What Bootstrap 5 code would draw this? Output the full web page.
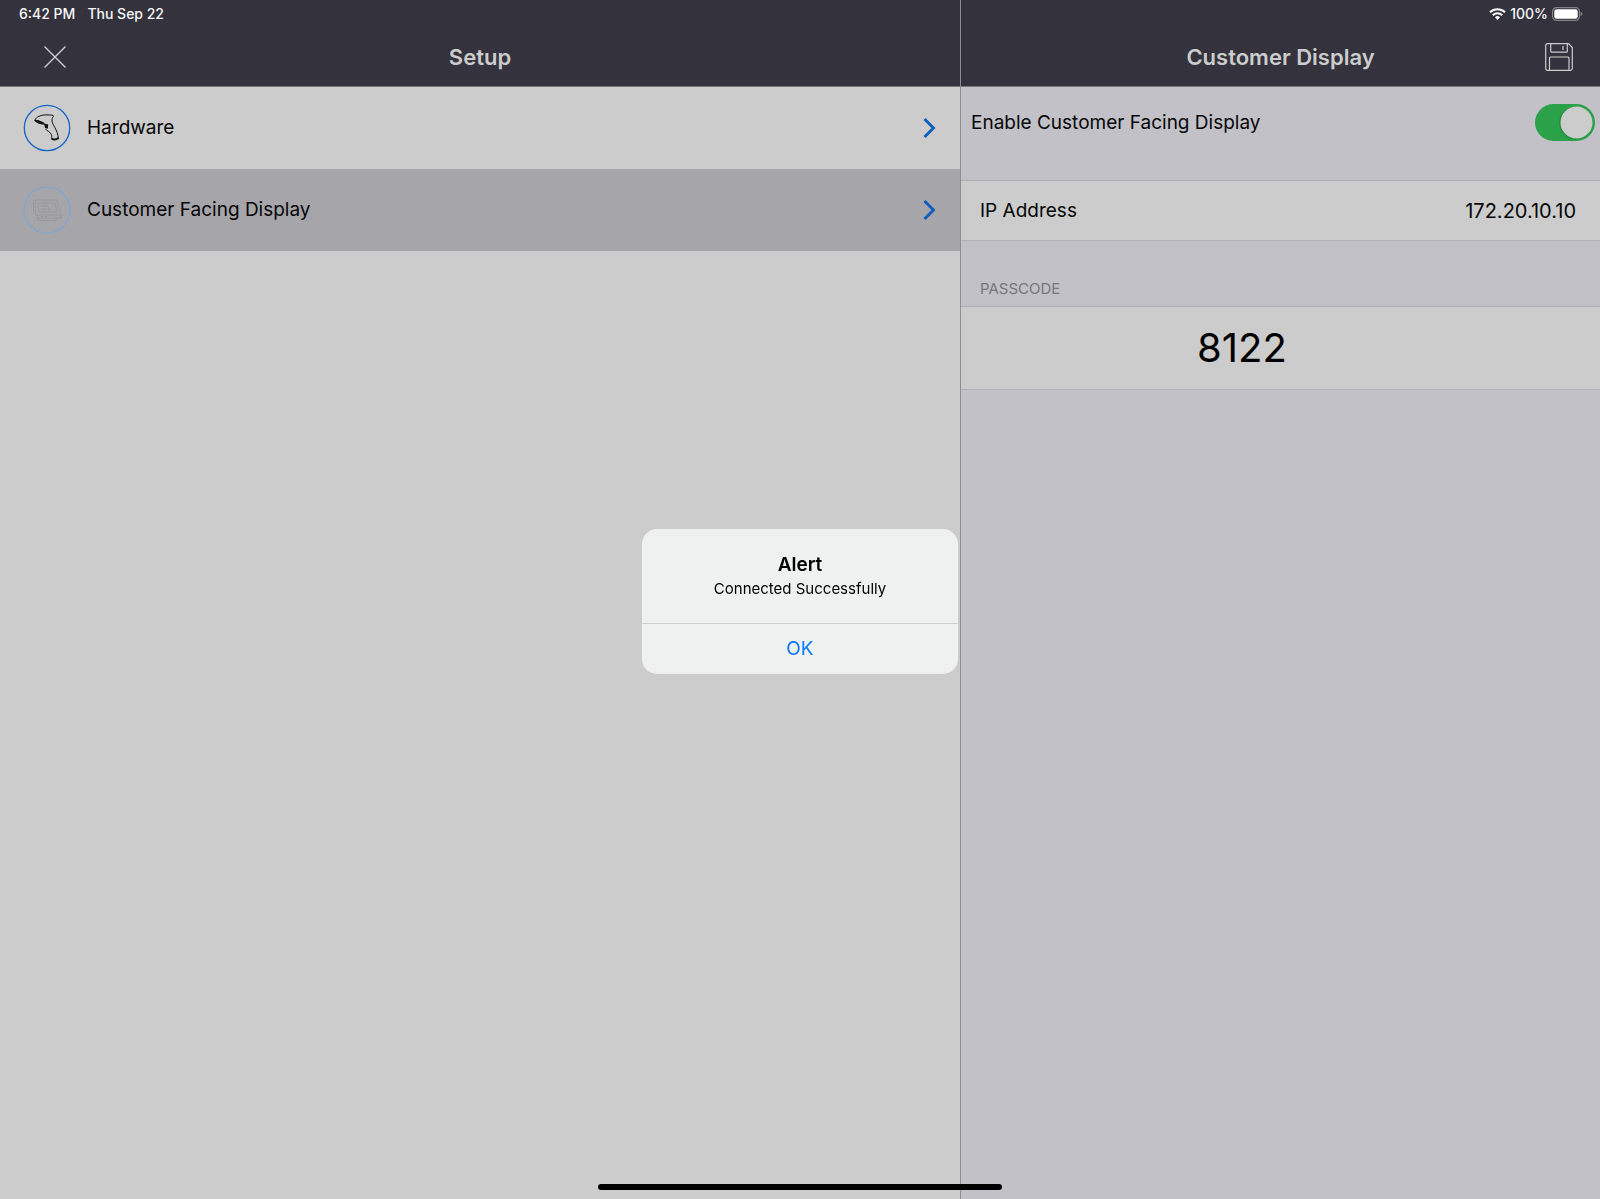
<!DOCTYPE html>
<html lang="en">
<head>
<meta charset="utf-8">
<meta name="viewport" content="width=device-width, initial-scale=1">
<title>Setup</title>
<link href="https://cdn.jsdelivr.net/npm/bootstrap@5.3.0/dist/css/bootstrap.min.css" rel="stylesheet">
<style>
  body { font-family: Inter, "Liberation Sans", sans-serif; font-size: 19px; line-height: 24px; color: #060606; background: #ccc; }
  .pane-setup { width: 60%; background: #ccc; }
  .pane-detail { width: 40%; background: #c2c1c7; border-left: 1px solid #8e8e8e; }
  .top-bar { background: #33323d; border-bottom: 1px solid #76757c; color: #ccc; }
  .status-line { height: 28px; font-size: 14px; line-height: 20px; font-weight: 500; color: #f8f8f8; padding: 0 17px 0 19px; gap: 12px; }
  .title-line { display: grid; grid-template-columns: 56px 1fr 56px; height: 58px; padding: 0 27px; }
  .detail-title { padding: 0 13px; }
  .title-line h1 { font-size: 22px; line-height: 28px; font-weight: 600; }
  .title-line .btn { border: 0; color: #ccc; line-height: 0; }
  .menu-item { height: 82px; padding: 0 24px 0 23px; color: #060606; }
  .menu-item.chosen { background: #a6a5aa; }
  .chev { color: #0a5cbd; }
  .switch-row { height: 93px; padding: 17px 5px 0 10px; }
  .switch-row label { line-height: 37px; }
  .switch-row .form-check-input { width: 60px; height: 37px; border: 0; box-shadow: none; background-color: #b4b4b8; background-size: 37px 37px;
    --bs-form-switch-bg: url("data:image/svg+xml,%3csvg xmlns='http://www.w3.org/2000/svg' viewBox='0 0 37 37'%3e%3ccircle cx='18.5' cy='18.5' r='16' fill='%23cccccc'/%3e%3c/svg%3e"); }
  .switch-row .form-check-input:checked { background-color: #2ba149;
    --bs-form-switch-bg: url("data:image/svg+xml,%3csvg xmlns='http://www.w3.org/2000/svg' viewBox='0 0 37 37'%3e%3ccircle cx='17.5' cy='19' r='16.5' fill='%23268d40'/%3e%3ccircle cx='18.5' cy='18.5' r='16' fill='%23cccccc'/%3e%3c/svg%3e"); }
  .cell-row { background: #ccc; border-top: 1px solid #afaeb4; border-bottom: 1px solid #b2b1b7; padding: 0 24px 0 19px; }
  .ip-row { height: 61px; }
  .ip-value { font-size: 20px; }
  .group-label { font-size: 15px; line-height: 20px; font-weight: 400; color: #77767c; padding: 38px 19px 7px; }
  .code-row { height: 84px; padding-right: 96px; font-size: 40px; line-height: 48px; color: #000; }
  .alert-layer { z-index: 20; padding-top: 4px; }
  .alert-box { width: 316px; border-radius: 15px; background: #eff0f0; color: #000; }
  .alert-box h2 { font-size: 19px; line-height: 24px; font-weight: 600; }
  .alert-box p { font-size: 15px; line-height: 24px; }
  .alert-text { padding: 24px 16px 22px; }
  .alert-box .btn { height: 51px; border: 0; border-top: 1px solid #cfd0d0; border-radius: 0; color: #0a7aff; font-size: 19px; line-height: 24px; }
  .home-bar { width: 404px; height: 6px; border-radius: 3px; background: #000; bottom: 9px; z-index: 21; }
</style>
<script src="https://cdn.jsdelivr.net/npm/bootstrap@5.3.0/dist/js/bootstrap.bundle.min.js"></script>
</head>
<body>
<div class="d-flex min-vh-100">
  <section class="pane-setup d-flex flex-column">
    <header class="top-bar">
      <div class="status-line d-flex align-items-center"><span>6:42 PM</span><span>Thu Sep 22</span></div>
      <div class="title-line align-items-center">
        <button type="button" class="btn p-0 d-flex justify-content-center" aria-label="Close">
          <svg width="24" height="24" viewBox="0 0 24 24" fill="none" stroke="currentColor" stroke-width="1.4"><path d="M1.500 1.500l21 21M22.500 1.500l-21 21"/></svg>
        </button>
        <h1 class="m-0 text-center">Setup</h1>
      </div>
    </header>
    <nav>
      <a href="#hardware" class="menu-item d-flex align-items-center text-decoration-none">
        <svg width="48" height="48" viewBox="0 0 48 48" fill="none" stroke="#111" stroke-width="1">
          <circle cx="24" cy="24" r="22.700" stroke="#1565c4" stroke-width="1.300"/>
          <path d="M12 16.500c0-2.500 4-5 9-5.500 4-.4 7 .2 9 .2l.4 1.300c-.8 1-1.600 2-1.400 4.500.3 4 5.500 8 6.500 18"/>
          <path d="M12 16.500c.5 1.500 4 2.800 7 3.500l4 .5M22.500 25l1.500 1.500c4 2 5.500 5 4.500 8"/>
          <path d="M12.500 16.500c2-.5 5 1 7.500 2.500-3 .8-6-.6-7.500-2.500z" fill="#111" stroke-width="1.500"/>
          <path d="M22 20.500l2.500.5-.3 3-1.700-.5z" fill="#111" stroke-width="1.300"/>
          <path d="M28.500 34.500c2 1.500 5 1 7-.5" stroke-width="2"/>
        </svg>
        <span class="ms-3 flex-grow-1">Hardware</span>
        <svg class="chev" width="13" height="20" viewBox="0 0 13 20" fill="none" stroke="currentColor" stroke-width="2.800"><path d="M1.500 1l9 9-9 9"/></svg>
      </a>
      <a href="#display" class="menu-item chosen d-flex align-items-center text-decoration-none" aria-current="page">
        <svg width="48" height="48" viewBox="0 0 48 48" fill="none" stroke="#96969a" stroke-width=".8">
          <circle cx="24" cy="24" r="23" stroke="#6fa8e0" stroke-width="1.200" stroke-dasharray="3 1"/>
          <path d="M12.500 14H34l4 15H12.500zM10.500 14v14.500M15.500 17H32l2.500 9H15.500zM18 20h8M18 23h10"/>
          <path d="M14 29v3h24v-3M18 30.500h2M22 30.500h2M15 32v2.500h18V32"/>
        </svg>
        <span class="ms-3 flex-grow-1">Customer Facing Display</span>
        <svg class="chev" width="13" height="20" viewBox="0 0 13 20" fill="none" stroke="currentColor" stroke-width="2.800"><path d="M1.500 1l9 9-9 9"/></svg>
      </a>
    </nav>
  </section>

  <main class="pane-detail">
    <header class="top-bar">
      <div class="status-line d-flex align-items-center justify-content-end">
        <div class="d-flex align-items-center gap-1">
          <svg width="17" height="12" viewBox="0 0 17 12" fill="none" stroke="#f8f8f8" stroke-width="2"><path d="M1 4.300a10.800 10.800 0 0 1 15 0M3.800 7.200a6.700 6.700 0 0 1 9.400 0"/><path d="M8.500 12l-2.500-2.700a3.600 3.600 0 0 1 5 0z" fill="#f8f8f8" stroke="none"/></svg>
          <span>100%</span>
          <svg width="31" height="14" viewBox="0 0 31 14"><rect x=".6" y=".6" width="26.800" height="12.800" rx="4" fill="none" stroke="#85848b" stroke-width="1.200"/><rect x="2.300" y="2.200" width="23.400" height="9.600" rx="2.300" fill="#fff"/><path d="M28.600 4.800c2.300.7 2.300 3.700 0 4.400z" fill="#85848b"/></svg>
        </div>
      </div>
      <div class="title-line detail-title align-items-center">
        <span></span>
        <h1 class="m-0 text-center">Customer Display</h1>
        <button type="button" class="btn p-0 d-flex justify-content-center" aria-label="Save">
          <svg width="28" height="28" viewBox="0 0 28 28" fill="none" stroke="currentColor" stroke-width="1.200"><path d="M2.500.7h21l3.800 3.800v21a1.800 1.800 0 0 1-1.800 1.800h-23a1.800 1.800 0 0 1-1.800-1.800v-23A1.800 1.800 0 0 1 2.500.7z"/><path d="M5.700.7v7.500a1 1 0 0 0 1 1h14.600a1 1 0 0 0 1-1V.7M18 3v4M4.500 27.300V15a1 1 0 0 1 1-1h17.500a1 1 0 0 1 1 1v12.300"/></svg>
        </button>
      </div>
    </header>
    <div class="switch-row form-switch d-flex align-items-start justify-content-between">
      <label class="form-check-label" for="enableDisplay">Enable Customer Facing Display</label>
      <input class="form-check-input m-0" type="checkbox" role="switch" id="enableDisplay" checked>
    </div>
    <div class="cell-row ip-row d-flex align-items-center justify-content-between"><span>IP Address</span><span class="ip-value">172.20.10.10</span></div>
    <h2 class="group-label m-0">PASSCODE</h2>
    <div class="cell-row code-row d-flex align-items-center justify-content-center">8122</div>
  </main>
</div>

<div class="alert-layer position-fixed top-0 start-0 w-100 h-100 d-flex align-items-center justify-content-center">
  <div class="alert-box overflow-hidden text-center" role="alertdialog" aria-labelledby="alertTitle" aria-describedby="alertText">
    <div class="alert-text">
      <h2 id="alertTitle" class="m-0">Alert</h2>
      <p id="alertText" class="m-0">Connected Successfully</p>
    </div>
    <button type="button" class="btn w-100 d-block p-0">OK</button>
  </div>
</div>
<div class="home-bar position-fixed start-50 translate-middle-x"></div>
</body>
</html>
